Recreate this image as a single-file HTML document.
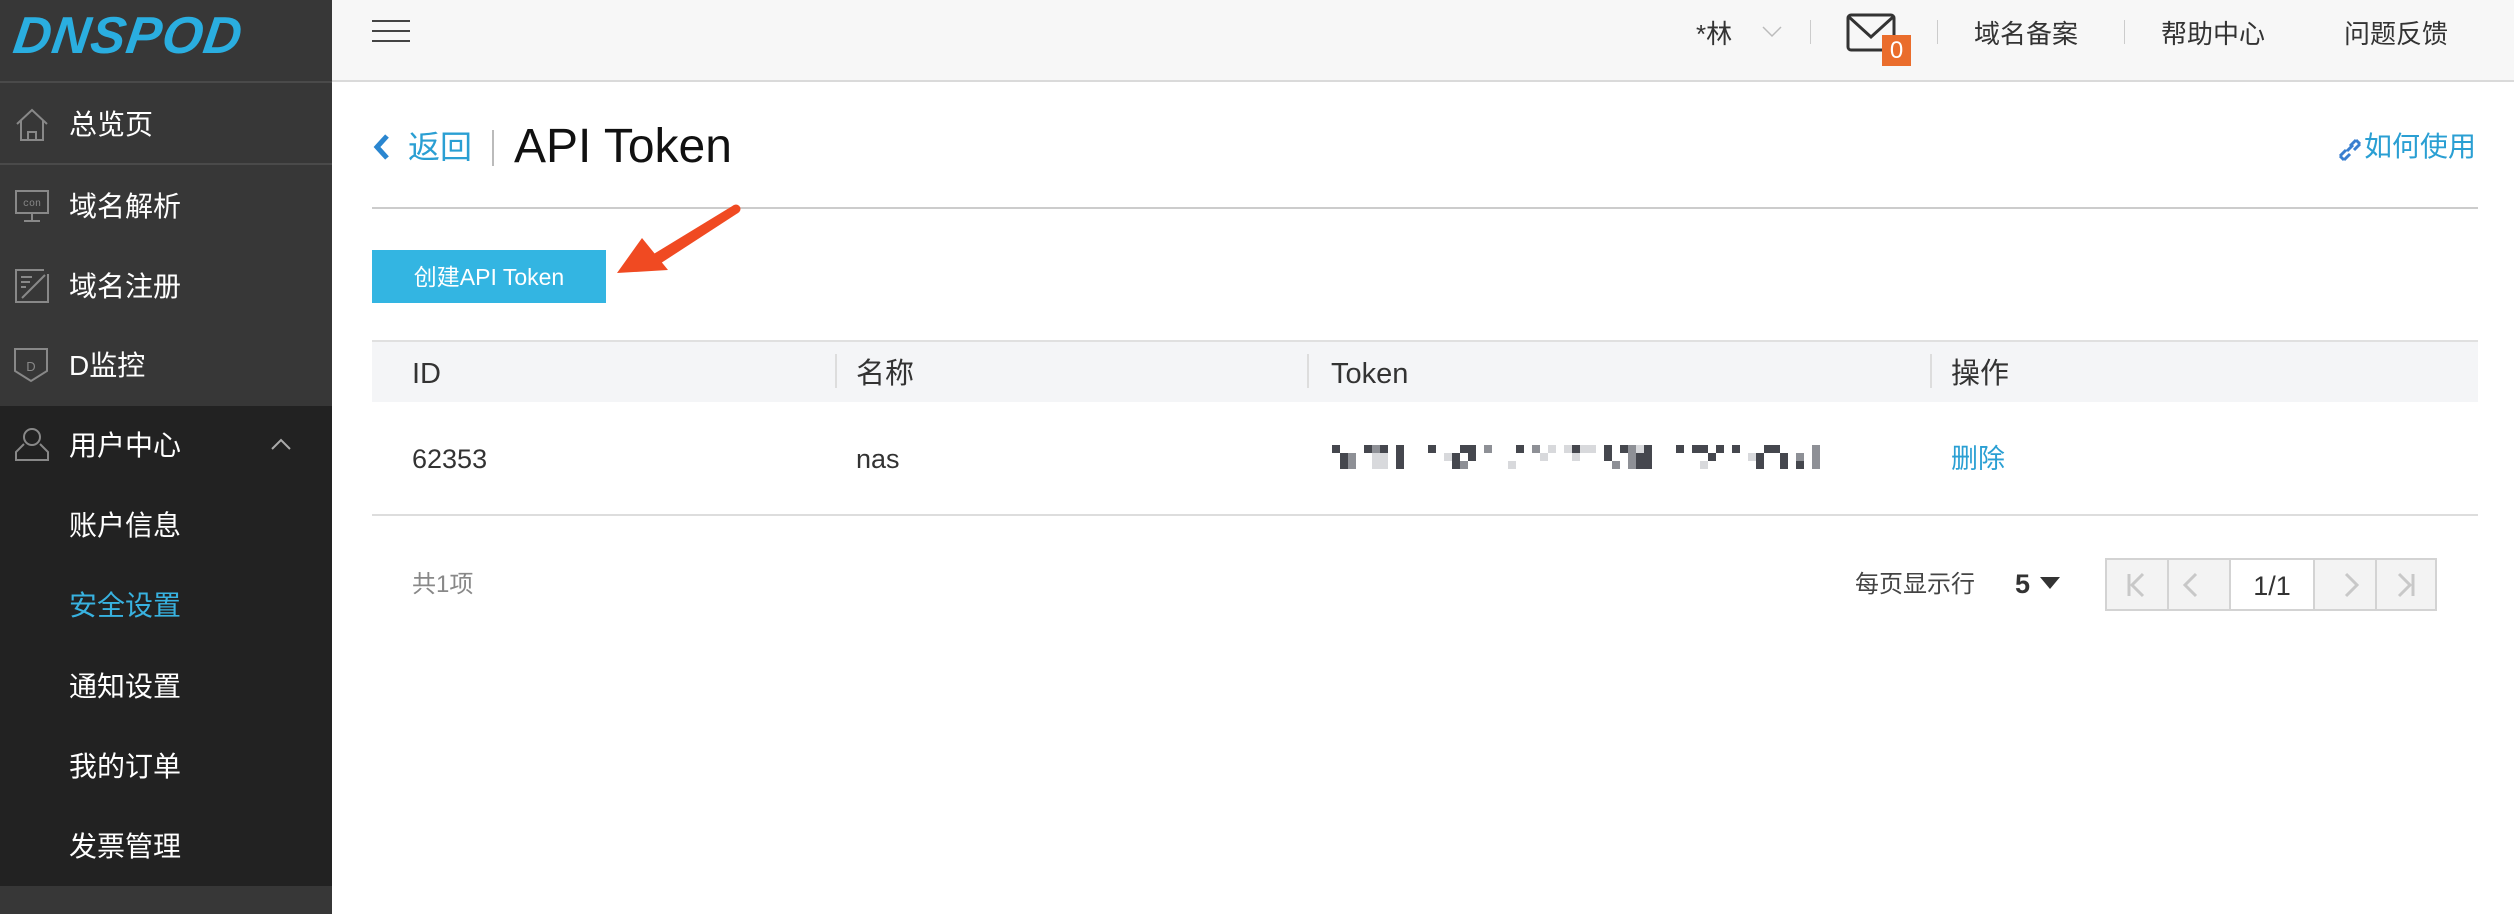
<!DOCTYPE html>
<html><head><meta charset="utf-8"><style>
*{margin:0;padding:0;box-sizing:border-box}
body{width:2514px;height:914px;overflow:hidden;background:#fff;font-family:"Liberation Sans","Noto Sans CJK SC",sans-serif;position:relative}
.a{position:absolute;white-space:nowrap}
#side{position:absolute;left:0;top:0;width:332px;height:914px;background:#373737}
.si{position:absolute;left:69px;color:#fff;font-size:28px;line-height:36px}
.hdr{position:absolute;left:332px;top:0;width:2182px;height:82px;background:#f7f7f7;border-bottom:2px solid #dadada}
.ht{position:absolute;top:16px;font-size:26px;color:#333;line-height:36px}
.vs{position:absolute;top:20px;width:1px;height:24px;background:#ccc}
.th{position:absolute;top:356px;font-size:29px;color:#333;line-height:36px}
.pc{position:absolute;top:558px;height:53px;border:2px solid #d3d3d3;background:#f3f3f3}
</style></head><body>
<div id="side">
  <div class="a" style="left:14px;top:6px;font:italic bold 52px 'Liberation Sans',sans-serif;color:#2aaee0;letter-spacing:1px;transform:skewX(-8deg)">DNSPOD</div>
  <div class="a" style="left:0;top:81px;width:332px;height:2px;background:#4a4a4a"></div>
  <div class="a" style="left:0;top:163px;width:332px;height:2px;background:#4a4a4a"></div>
  <svg class="a" style="left:14px;top:106px" width="36" height="36" viewBox="0 0 36 36" fill="none" stroke="#888" stroke-width="2"><path d="M3 18 L18 4 L33 18 M7 14 V34 H29 V14 M14 34 V26 H22 V34"/></svg>
  <div class="si" style="top:107px">总览页</div>
  <svg class="a" style="left:14px;top:188px" width="36" height="36" viewBox="0 0 36 36" fill="none" stroke="#888" stroke-width="2"><rect x="2" y="3" width="32" height="22"/><path d="M18 25 V32 M10 33 H26"/><text x="18" y="18" font-size="10" fill="#888" stroke="none" text-anchor="middle" font-family="Liberation Mono">con</text></svg>
  <div class="si" style="top:189px">域名解析</div>
  <svg class="a" style="left:14px;top:268px" width="36" height="36" viewBox="0 0 36 36" fill="none" stroke="#888" stroke-width="2"><path d="M34 6 V34 H2 V2 H30 M7 9 H18 M7 14 H16 M7 19 H12 M8 30 L31 7"/></svg>
  <div class="si" style="top:269px">域名注册</div>
  <svg class="a" style="left:13px;top:347px" width="36" height="36" viewBox="0 0 36 36" fill="none" stroke="#888" stroke-width="2"><path d="M2 2 H34 V24 L18 34 L2 24 Z"/><text x="18" y="24" font-size="13" fill="#888" stroke="none" text-anchor="middle">D</text></svg>
  <div class="si" style="top:348px">D监控</div>
  <div class="a" style="left:0;top:406px;width:332px;height:480px;background:#222"></div>
  <svg class="a" style="left:14px;top:426px" width="36" height="36" viewBox="0 0 36 36" fill="none" stroke="#888" stroke-width="2"><circle cx="18" cy="11" r="8"/><path d="M10 18 L2 26 V34 H34 V26 L26 18"/></svg>
  <div class="si" style="top:428px">用户中心</div>
  <svg class="a" style="left:271px;top:438px" width="20" height="12" viewBox="0 0 20 12" fill="none" stroke="#aaa" stroke-width="2"><path d="M1 11 L10 2 L19 11"/></svg>
  <div class="si" style="top:508px">账户信息</div>
  <div class="si" style="top:588px;color:#38b2e0">安全设置</div>
  <div class="si" style="top:669px">通知设置</div>
  <div class="si" style="top:749px">我的订单</div>
  <div class="si" style="top:829px">发票管理</div>
</div>
<div class="hdr">
  <div class="a" style="left:40px;top:20px;width:38px;height:2px;background:#444"></div>
  <div class="a" style="left:40px;top:30px;width:38px;height:2px;background:#444"></div>
  <div class="a" style="left:40px;top:40px;width:38px;height:2px;background:#444"></div>
  <div class="ht" style="left:1364px">*林</div>
  <svg class="a" style="left:1430px;top:26px" width="20" height="12" viewBox="0 0 20 12" fill="none" stroke="#bbb" stroke-width="1.5"><path d="M1 1 L10 10 L19 1"/></svg>
  <div class="vs" style="left:1478px"></div>
  <svg class="a" style="left:1514px;top:13px" width="52" height="40" viewBox="0 0 52 40" fill="none" stroke="#333" stroke-width="3"><rect x="2" y="2" width="46" height="35" rx="3"/><path d="M3 4 L25 24 L47 4"/></svg>
  <div class="a" style="left:1550px;top:35px;width:29px;height:31px;background:#ea6d2c;color:#fff;font-size:24px;line-height:31px;text-align:center">0</div>
  <div class="vs" style="left:1605px"></div>
  <div class="ht" style="left:1642px">域名备案</div>
  <div class="vs" style="left:1792px"></div>
  <div class="ht" style="left:1829px">帮助中心</div>
  <div class="ht" style="left:2012px">问题反馈</div>
</div>
<svg class="a" style="left:372px;top:133px" width="18" height="28" viewBox="0 0 18 28" fill="none" stroke="#2a86d0" stroke-width="5"><path d="M15 3 L5 14 L15 25"/></svg>
<div class="a" style="left:408px;top:127px;font-size:32px;color:#2a9fd3;line-height:40px">返回</div>
<div class="a" style="left:492px;top:130px;width:2px;height:36px;background:#bbb"></div>
<div class="a" style="left:514px;top:119px;font-size:48px;color:#111;line-height:56px">API Token</div>
<svg class="a" style="left:2336px;top:134px" width="28" height="28" viewBox="0 0 28 28" fill="none" stroke="#3a7fd0" stroke-width="3"><path d="M4 22 L10 16 M8 26 L14 20 M4 22 L8 26 M14 12 L20 6 M18 16 L24 10 M20 6 L24 10 M11 17 L17 11"/></svg>
<div class="a" style="left:2364px;top:129px;font-size:28px;color:#2a9fd3;line-height:36px">如何使用</div>
<div class="a" style="left:372px;top:207px;width:2106px;height:2px;background:#ccc"></div>
<div class="a" style="left:372px;top:250px;width:234px;height:53px;background:#33b5e2;color:#fff;font-size:23px;line-height:55px;text-align:center">创建API Token</div>
<svg class="a" style="left:600px;top:195px" width="150" height="90" viewBox="0 0 150 90"><path d="M134 10 L52 60 L58 70 L138 18 Z" fill="#f04a22"/><path d="M17 78 L42 43 L68 75 Z" fill="#f04a22"/><circle cx="136" cy="14" r="4.5" fill="#f04a22"/></svg>
<div class="a" style="left:372px;top:340px;width:2106px;height:62px;background:#f4f5f7;border-top:2px solid #e0e0e0"></div>
<div class="a" style="left:835px;top:354px;width:2px;height:34px;background:#ddd"></div>
<div class="a" style="left:1307px;top:354px;width:2px;height:34px;background:#ddd"></div>
<div class="a" style="left:1930px;top:354px;width:2px;height:34px;background:#ddd"></div>
<div class="th" style="left:412px">ID</div>
<div class="th" style="left:856px">名称</div>
<div class="th" style="left:1331px">Token</div>
<div class="th" style="left:1951px">操作</div>
<div class="a" style="left:412px;top:441px;font-size:27px;color:#333;line-height:36px">62353</div>
<div class="a" style="left:856px;top:441px;font-size:27px;color:#333;line-height:36px">nas</div>
<div class="a" style="left:1951px;top:441px;font-size:27px;color:#2a9fd3;line-height:36px">删除</div>
<svg class="a" style="left:1332px;top:445px" width="496" height="24" viewBox="0 0 496 24">
<g fill="#45474e">
<rect x="0" y="0" width="8" height="8"/><rect x="32" y="0" width="8" height="8"/><rect x="48" y="0" width="8" height="8"/><rect x="64" y="0" width="8" height="8"/><rect x="96" y="0" width="8" height="8"/><rect x="128" y="0" width="16" height="8"/><rect x="184" y="0" width="8" height="8"/><rect x="240" y="0" width="8" height="8"/><rect x="272" y="0" width="8" height="8"/><rect x="288" y="0" width="8" height="8"/><rect x="312" y="0" width="8" height="8"/><rect x="344" y="0" width="8" height="8"/><rect x="360" y="0" width="16" height="8"/><rect x="384" y="0" width="8" height="8"/><rect x="400" y="0" width="8" height="8"/><rect x="432" y="0" width="16" height="8"/>
<rect x="8" y="8" width="8" height="16"/><rect x="64" y="8" width="8" height="16"/><rect x="120" y="8" width="8" height="16"/><rect x="136" y="8" width="8" height="8"/><rect x="272" y="8" width="8" height="8"/><rect x="304" y="8" width="16" height="16"/><rect x="376" y="8" width="8" height="8"/><rect x="424" y="8" width="8" height="16"/><rect x="448" y="8" width="8" height="16"/><rect x="464" y="16" width="8" height="8"/>
</g>
<g fill="#8e9096">
<rect x="16" y="8" width="8" height="16"/><rect x="40" y="0" width="8" height="8"/><rect x="152" y="0" width="8" height="8"/><rect x="200" y="0" width="8" height="8"/><rect x="128" y="16" width="8" height="8"/><rect x="280" y="16" width="8" height="8"/><rect x="296" y="0" width="8" height="16"/><rect x="296" y="16" width="8" height="8"/><rect x="464" y="8" width="8" height="8"/><rect x="480" y="0" width="8" height="24"/>
</g>
<g fill="#d8d9dc">
<rect x="40" y="8" width="16" height="16"/><rect x="112" y="8" width="8" height="8"/><rect x="176" y="16" width="8" height="8"/><rect x="208" y="8" width="8" height="8"/><rect x="216" y="0" width="8" height="8"/><rect x="232" y="0" width="8" height="8"/><rect x="248" y="0" width="16" height="8"/><rect x="240" y="8" width="8" height="8"/><rect x="304" y="0" width="8" height="8"/><rect x="368" y="16" width="8" height="8"/><rect x="416" y="8" width="8" height="8"/>
</g></svg>
<div class="a" style="left:372px;top:514px;width:2106px;height:2px;background:#ddd"></div>
<div class="a" style="left:412px;top:569px;font-size:24px;color:#888;line-height:32px">共1项</div>
<div class="a" style="left:1855px;top:569px;font-size:24px;color:#444;line-height:32px">每页显示行</div>
<div class="a" style="left:2015px;top:567px;font-size:27px;color:#333;font-weight:bold;line-height:34px">5</div>
<svg class="a" style="left:2039px;top:576px" width="22" height="14" viewBox="0 0 22 14"><path d="M1 1 H21 L11 13 Z" fill="#333"/></svg>
<div class="pc" style="left:2105px;width:64px"></div>
<div class="pc" style="left:2167px;width:64px"></div>
<div class="pc" style="left:2229px;width:86px;background:#fff"></div>
<div class="pc" style="left:2313px;width:64px"></div>
<div class="pc" style="left:2375px;width:62px"></div>
<div class="a" style="left:2229px;top:569px;width:86px;text-align:center;font-size:27px;color:#333;line-height:34px">1/1</div>
<svg class="a" style="left:2105px;top:558px" width="332" height="53" viewBox="0 0 332 53" fill="none" stroke="#c8c8c8" stroke-width="3"><path d="M24 16 V38 M38 16 L27 27 L38 38 M91 16 L80 27 L91 38 M241 16 L252 27 L241 38 M294 16 L305 27 L294 38 M308 16 V38"/></svg>
</body></html>
